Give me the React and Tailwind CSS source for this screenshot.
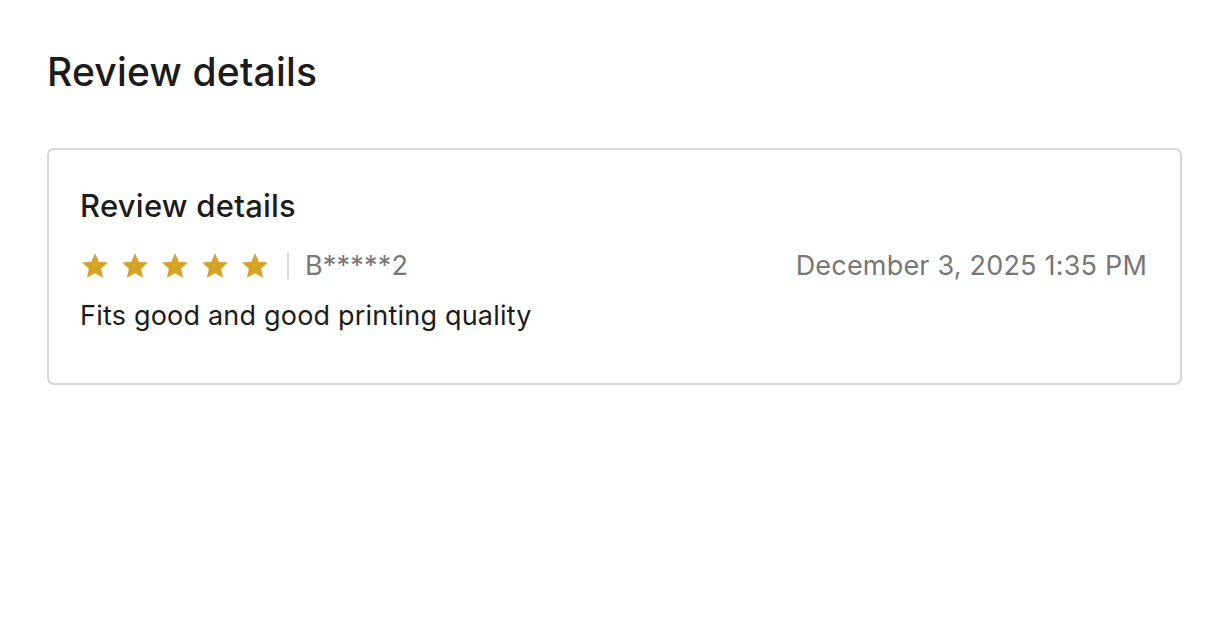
import React from 'react';

const Star = () => (
  <svg viewBox="0 0 24 24" className="w-[30px] h-[30px]" fill="#d6a324">
    <path d="M12 1.8l3.05 6.7 7.3.75-5.47 4.93 1.55 7.2L12 17.7l-6.43 3.68 1.55-7.2L1.65 9.25l7.3-.75z" />
  </svg>
);

const ReviewCard = ({ rating, user, date, text }) => (
  <div className="border-2 border-[#d6d6d6] rounded-[7px] pl-[31px] pr-[33px] pt-[36px] pb-[49px]">
    <h3 className="text-[31px] font-medium text-[#1c1c1c] leading-[40px] tracking-[0.25px]">Review details</h3>
    <div className="flex items-center justify-between mt-[25px]">
      <div className="flex items-center">
        <div className="flex gap-[10px]">
          {Array.from({ length: rating }).map((_, i) => (
            <Star key={i} />
          ))}
        </div>
        <span className="w-[2px] h-[26px] bg-[#d9d9d9] ml-[17px] mr-[16px]" />
        <span className="text-[27px] text-[#777777] leading-[30px] tracking-[0.2px]">{user}</span>
      </div>
      <span className="text-[27px] text-[#777777] leading-[30px] tracking-[0.2px]">{date}</span>
    </div>
    <p className="text-[27px] text-[#1c1c1c] mt-[17px] leading-[36px] tracking-[0.2px]">{text}</p>
  </div>
);

export default function App() {
  return (
    <div className="min-h-screen bg-white px-[47px] pt-[46px] font-['Inter',sans-serif]">
      <h1 className="text-[39px] font-medium text-[#1c1c1c] leading-[52px] tracking-[0.2px]">Review details</h1>
      <div className="mt-[50px] w-[1135px]">
        <ReviewCard
          rating={5}
          user="B*****2"
          date="December 3, 2025 1:35 PM"
          text="Fits good and good printing quality"
        />
      </div>
    </div>
  );
}
